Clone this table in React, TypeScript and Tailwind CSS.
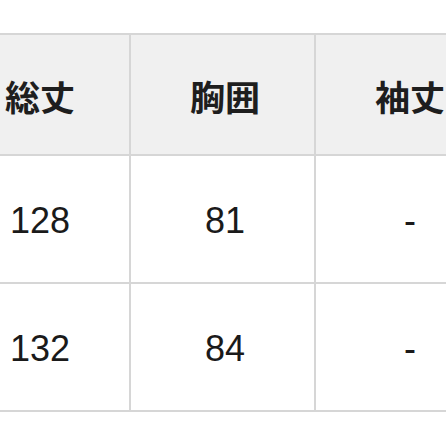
const headers = ['総丈', '胸囲', '袖丈'];
const rows = [
  ['128', '81', '-'],
  ['132', '84', '-'],
];

export default function App() {
  return (
    <div className="w-[446px] h-[446px] overflow-hidden bg-white">
      <div className="mt-[33px] ml-[-54px] w-[555px] border-t-2 border-[#d6d6d6]">
        <div className="grid grid-cols-[185px_185px_185px]">
          {headers.map((h) => (
            <div
              key={h}
              className="h-[121px] pl-[5px] pt-[1px] flex items-center justify-center bg-[#f0f0f0] border-r-2 border-b-2 border-[#d6d6d6] text-[35px] font-bold text-[#1e1e1e] font-['Noto_Sans_CJK_JP',sans-serif] leading-none"
            >
              {h}
            </div>
          ))}
          {rows.map((r, i) =>
            r.map((v, j) => (
              <div
                key={`${i}-${j}`}
                className="h-[128px] pl-[5px] pt-[3px] flex items-center justify-center bg-white border-r-2 border-b-2 border-[#d6d6d6] text-[36px] text-[#1a1a1a] font-['Liberation_Sans',Arial,sans-serif] leading-none"
              >
                {v}
              </div>
            ))
          )}
        </div>
      </div>
    </div>
  );
}
